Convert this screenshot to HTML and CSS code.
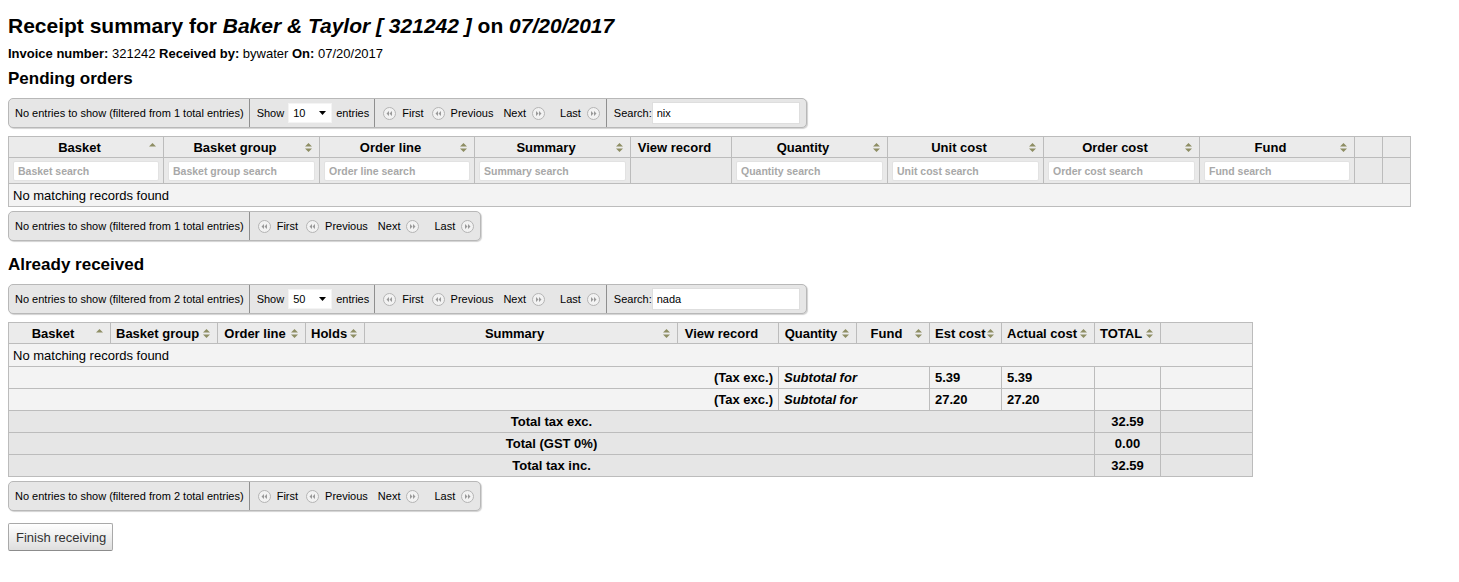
FILE: index.html
```html
<!DOCTYPE html>
<html>
<head>
<meta charset="utf-8">
<title>Receipt summary</title>
<link rel="stylesheet" href="styles.css">
</head>
<body>
<div class="page">
  <h1 class="title">Receipt summary for <em>Baker &amp; Taylor [ 321242 ]</em> on <em>07/20/2017</em></h1>
  <p class="meta"><b>Invoice number:</b> 321242 <b>Received by:</b> bywater <b>On:</b> 07/20/2017</p>

  <h3 class="section-title">Pending orders</h3>

  <div class="pager pager-top">
    <div class="pager-sec info">No entries to show (filtered from 1 total entries)</div>
    <div class="pager-sec length">Show <span class="fake-select">10<svg class="caret" width="7" height="4" viewBox="0 0 7 4"><path d="M0 0h7L3.5 4z" fill="#000"/></svg></span> entries</div>
    <div class="pager-sec paging">
      <span class="pg"><svg class="pg-ico" width="13" height="13" viewBox="0 0 13 13"><circle cx="6.5" cy="6.5" r="6" fill="#f2f2f2" stroke="#b4b4b4"/><path d="M6 4v5L3.5 6.5zM9 4v5L6.5 6.5z" fill="#9a9a9a"/></svg>First</span>
      <span class="pg"><svg class="pg-ico" width="13" height="13" viewBox="0 0 13 13"><circle cx="6.5" cy="6.5" r="6" fill="#f2f2f2" stroke="#b4b4b4"/><path d="M6 4v5L3.5 6.5zM9 4v5L6.5 6.5z" fill="#9a9a9a"/></svg>Previous</span>
      <span class="pg pg-next">Next<svg class="pg-ico" width="13" height="13" viewBox="0 0 13 13"><circle cx="6.5" cy="6.5" r="6" fill="#f2f2f2" stroke="#b4b4b4"/><path d="M4 4v5l2.5-2.5zM7 4v5l2.5-2.5z" fill="#9a9a9a"/></svg></span>
      <span class="pg pg-last">Last<svg class="pg-ico" width="13" height="13" viewBox="0 0 13 13"><circle cx="6.5" cy="6.5" r="6" fill="#f2f2f2" stroke="#b4b4b4"/><path d="M4 4v5l2.5-2.5zM7 4v5l2.5-2.5z" fill="#9a9a9a"/></svg></span>
    </div>
    <div class="pager-sec search">Search:<input class="search-input" type="text" value="nix"></div>
  </div>

  <table class="grid grid-pending">
    <colgroup>
      <col class="c155"><col class="c156"><col class="c155"><col class="c156"><col class="c101"><col class="c156"><col class="c156"><col class="c156"><col class="c155"><col class="c28"><col class="c28">
    </colgroup>
    <thead>
      <tr class="head-row">
        <th>Basket<svg class="sort" width="7" height="9" viewBox="0 0 7 9"><path d="M0 3.5L3.5 0 7 3.5z" fill="#8e8e64"/></svg></th>
        <th>Basket group<svg class="sort" width="7" height="9" viewBox="0 0 7 9"><path d="M0 3.5L3.5 0 7 3.5zM0 5.5L3.5 9 7 5.5z" fill="#8e8e64"/></svg></th>
        <th>Order line<svg class="sort" width="7" height="9" viewBox="0 0 7 9"><path d="M0 3.5L3.5 0 7 3.5zM0 5.5L3.5 9 7 5.5z" fill="#8e8e64"/></svg></th>
        <th>Summary<svg class="sort" width="7" height="9" viewBox="0 0 7 9"><path d="M0 3.5L3.5 0 7 3.5zM0 5.5L3.5 9 7 5.5z" fill="#8e8e64"/></svg></th>
        <th>View record</th>
        <th>Quantity<svg class="sort" width="7" height="9" viewBox="0 0 7 9"><path d="M0 3.5L3.5 0 7 3.5zM0 5.5L3.5 9 7 5.5z" fill="#8e8e64"/></svg></th>
        <th>Unit cost<svg class="sort" width="7" height="9" viewBox="0 0 7 9"><path d="M0 3.5L3.5 0 7 3.5zM0 5.5L3.5 9 7 5.5z" fill="#8e8e64"/></svg></th>
        <th>Order cost<svg class="sort" width="7" height="9" viewBox="0 0 7 9"><path d="M0 3.5L3.5 0 7 3.5zM0 5.5L3.5 9 7 5.5z" fill="#8e8e64"/></svg></th>
        <th>Fund<svg class="sort" width="7" height="9" viewBox="0 0 7 9"><path d="M0 3.5L3.5 0 7 3.5zM0 5.5L3.5 9 7 5.5z" fill="#8e8e64"/></svg></th>
        <th></th>
        <th></th>
      </tr>
      <tr class="filter-row">
        <td><input class="filter" type="text" placeholder="Basket search"></td>
        <td><input class="filter" type="text" placeholder="Basket group search"></td>
        <td><input class="filter" type="text" placeholder="Order line search"></td>
        <td><input class="filter" type="text" placeholder="Summary search"></td>
        <td></td>
        <td><input class="filter" type="text" placeholder="Quantity search"></td>
        <td><input class="filter" type="text" placeholder="Unit cost search"></td>
        <td><input class="filter" type="text" placeholder="Order cost search"></td>
        <td><input class="filter" type="text" placeholder="Fund search"></td>
        <td></td>
        <td></td>
      </tr>
    </thead>
    <tbody>
      <tr class="body-row"><td colspan="11">No matching records found</td></tr>
    </tbody>
  </table>

  <div class="pager pager-bottom-1">
    <div class="pager-sec info">No entries to show (filtered from 1 total entries)</div>
    <div class="pager-sec paging">
      <span class="pg"><svg class="pg-ico" width="13" height="13" viewBox="0 0 13 13"><circle cx="6.5" cy="6.5" r="6" fill="#f2f2f2" stroke="#b4b4b4"/><path d="M6 4v5L3.5 6.5zM9 4v5L6.5 6.5z" fill="#9a9a9a"/></svg>First</span>
      <span class="pg"><svg class="pg-ico" width="13" height="13" viewBox="0 0 13 13"><circle cx="6.5" cy="6.5" r="6" fill="#f2f2f2" stroke="#b4b4b4"/><path d="M6 4v5L3.5 6.5zM9 4v5L6.5 6.5z" fill="#9a9a9a"/></svg>Previous</span>
      <span class="pg pg-next">Next<svg class="pg-ico" width="13" height="13" viewBox="0 0 13 13"><circle cx="6.5" cy="6.5" r="6" fill="#f2f2f2" stroke="#b4b4b4"/><path d="M4 4v5l2.5-2.5zM7 4v5l2.5-2.5z" fill="#9a9a9a"/></svg></span>
      <span class="pg pg-last">Last<svg class="pg-ico" width="13" height="13" viewBox="0 0 13 13"><circle cx="6.5" cy="6.5" r="6" fill="#f2f2f2" stroke="#b4b4b4"/><path d="M4 4v5l2.5-2.5zM7 4v5l2.5-2.5z" fill="#9a9a9a"/></svg></span>
    </div>
  </div>

  <h3 class="section-title received-title">Already received</h3>

  <div class="pager pager-top pager-top-2">
    <div class="pager-sec info">No entries to show (filtered from 2 total entries)</div>
    <div class="pager-sec length">Show <span class="fake-select">50<svg class="caret" width="7" height="4" viewBox="0 0 7 4"><path d="M0 0h7L3.5 4z" fill="#000"/></svg></span> entries</div>
    <div class="pager-sec paging">
      <span class="pg"><svg class="pg-ico" width="13" height="13" viewBox="0 0 13 13"><circle cx="6.5" cy="6.5" r="6" fill="#f2f2f2" stroke="#b4b4b4"/><path d="M6 4v5L3.5 6.5zM9 4v5L6.5 6.5z" fill="#9a9a9a"/></svg>First</span>
      <span class="pg"><svg class="pg-ico" width="13" height="13" viewBox="0 0 13 13"><circle cx="6.5" cy="6.5" r="6" fill="#f2f2f2" stroke="#b4b4b4"/><path d="M6 4v5L3.5 6.5zM9 4v5L6.5 6.5z" fill="#9a9a9a"/></svg>Previous</span>
      <span class="pg pg-next">Next<svg class="pg-ico" width="13" height="13" viewBox="0 0 13 13"><circle cx="6.5" cy="6.5" r="6" fill="#f2f2f2" stroke="#b4b4b4"/><path d="M4 4v5l2.5-2.5zM7 4v5l2.5-2.5z" fill="#9a9a9a"/></svg></span>
      <span class="pg pg-last">Last<svg class="pg-ico" width="13" height="13" viewBox="0 0 13 13"><circle cx="6.5" cy="6.5" r="6" fill="#f2f2f2" stroke="#b4b4b4"/><path d="M4 4v5l2.5-2.5zM7 4v5l2.5-2.5z" fill="#9a9a9a"/></svg></span>
    </div>
    <div class="pager-sec search">Search:<input class="search-input" type="text" value="nada"></div>
  </div>

  <table class="grid grid-received">
    <colgroup>
      <col class="c102"><col class="c107"><col class="c88"><col class="c59"><col class="c313"><col class="c101"><col class="c78"><col class="c73"><col class="c72"><col class="c93"><col class="c66"><col class="c92">
    </colgroup>
    <thead>
      <tr class="head-row">
        <th>Basket<svg class="sort" width="7" height="9" viewBox="0 0 7 9"><path d="M0 3.5L3.5 0 7 3.5z" fill="#8e8e64"/></svg></th>
        <th>Basket group<svg class="sort" width="7" height="9" viewBox="0 0 7 9"><path d="M0 3.5L3.5 0 7 3.5zM0 5.5L3.5 9 7 5.5z" fill="#8e8e64"/></svg></th>
        <th>Order line<svg class="sort" width="7" height="9" viewBox="0 0 7 9"><path d="M0 3.5L3.5 0 7 3.5zM0 5.5L3.5 9 7 5.5z" fill="#8e8e64"/></svg></th>
        <th>Holds<svg class="sort" width="7" height="9" viewBox="0 0 7 9"><path d="M0 3.5L3.5 0 7 3.5zM0 5.5L3.5 9 7 5.5z" fill="#8e8e64"/></svg></th>
        <th>Summary<svg class="sort" width="7" height="9" viewBox="0 0 7 9"><path d="M0 3.5L3.5 0 7 3.5zM0 5.5L3.5 9 7 5.5z" fill="#8e8e64"/></svg></th>
        <th>View record</th>
        <th>Quantity<svg class="sort" width="7" height="9" viewBox="0 0 7 9"><path d="M0 3.5L3.5 0 7 3.5zM0 5.5L3.5 9 7 5.5z" fill="#8e8e64"/></svg></th>
        <th>Fund<svg class="sort" width="7" height="9" viewBox="0 0 7 9"><path d="M0 3.5L3.5 0 7 3.5zM0 5.5L3.5 9 7 5.5z" fill="#8e8e64"/></svg></th>
        <th>Est cost<svg class="sort" width="7" height="9" viewBox="0 0 7 9"><path d="M0 3.5L3.5 0 7 3.5zM0 5.5L3.5 9 7 5.5z" fill="#8e8e64"/></svg></th>
        <th>Actual cost<svg class="sort" width="7" height="9" viewBox="0 0 7 9"><path d="M0 3.5L3.5 0 7 3.5zM0 5.5L3.5 9 7 5.5z" fill="#8e8e64"/></svg></th>
        <th>TOTAL<svg class="sort" width="7" height="9" viewBox="0 0 7 9"><path d="M0 3.5L3.5 0 7 3.5zM0 5.5L3.5 9 7 5.5z" fill="#8e8e64"/></svg></th>
        <th></th>
      </tr>
    </thead>
    <tbody>
      <tr class="body-row"><td colspan="12">No matching records found</td></tr>
    </tbody>
    <tfoot>
      <tr class="sub-row">
        <th colspan="6" class="right">(Tax exc.)</th>
        <th colspan="2" class="left"><i>Subtotal for</i></th>
        <th class="left">5.39</th>
        <th class="left">5.39</th>
        <td></td>
        <td></td>
      </tr>
      <tr class="sub-row">
        <th colspan="6" class="right">(Tax exc.)</th>
        <th colspan="2" class="left"><i>Subtotal for</i></th>
        <th class="left">27.20</th>
        <th class="left">27.20</th>
        <td></td>
        <td></td>
      </tr>
      <tr class="total-row">
        <th colspan="10">Total tax exc.</th>
        <th>32.59</th>
        <td></td>
      </tr>
      <tr class="total-row">
        <th colspan="10">Total (GST 0%)</th>
        <th>0.00</th>
        <td></td>
      </tr>
      <tr class="total-row">
        <th colspan="10">Total tax inc.</th>
        <th>32.59</th>
        <td></td>
      </tr>
    </tfoot>
  </table>

  <div class="pager pager-bottom-2">
    <div class="pager-sec info">No entries to show (filtered from 2 total entries)</div>
    <div class="pager-sec paging">
      <span class="pg"><svg class="pg-ico" width="13" height="13" viewBox="0 0 13 13"><circle cx="6.5" cy="6.5" r="6" fill="#f2f2f2" stroke="#b4b4b4"/><path d="M6 4v5L3.5 6.5zM9 4v5L6.5 6.5z" fill="#9a9a9a"/></svg>First</span>
      <span class="pg"><svg class="pg-ico" width="13" height="13" viewBox="0 0 13 13"><circle cx="6.5" cy="6.5" r="6" fill="#f2f2f2" stroke="#b4b4b4"/><path d="M6 4v5L3.5 6.5zM9 4v5L6.5 6.5z" fill="#9a9a9a"/></svg>Previous</span>
      <span class="pg pg-next">Next<svg class="pg-ico" width="13" height="13" viewBox="0 0 13 13"><circle cx="6.5" cy="6.5" r="6" fill="#f2f2f2" stroke="#b4b4b4"/><path d="M4 4v5l2.5-2.5zM7 4v5l2.5-2.5z" fill="#9a9a9a"/></svg></span>
      <span class="pg pg-last">Last<svg class="pg-ico" width="13" height="13" viewBox="0 0 13 13"><circle cx="6.5" cy="6.5" r="6" fill="#f2f2f2" stroke="#b4b4b4"/><path d="M4 4v5l2.5-2.5zM7 4v5l2.5-2.5z" fill="#9a9a9a"/></svg></span>
    </div>
  </div>

  <div class="actions">
    <button class="btn" type="button">Finish receiving</button>
  </div>
</div>
</body>
</html>
```

FILE: styles.css
```css
* { box-sizing: border-box; }

body {
  margin: 0;
  background: #fff;
  color: #000;
  font-family: "Liberation Sans", Arial, sans-serif;
}

.page {
  padding: 0 8px;
}

.title {
  margin: 13px 0 0;
  font-size: 21px;
  line-height: 26px;
  font-weight: bold;
}

.title em { font-style: italic; }

.meta {
  margin: 7px 0 0;
  font-size: 13px;
  line-height: 16px;
}

.section-title {
  margin: 7px 0 0;
  font-size: 17px;
  line-height: 20px;
  font-weight: bold;
}

.received-title { margin-top: 14px; }

/* ---------- DataTables style pager bar ---------- */
.pager {
  display: flex;
  width: max-content;
  height: 30px;
  margin-top: 9px;
  border: 1px solid #b8b8b8;
  border-radius: 5px;
  background: #e6e6e6;
  box-shadow: 1px 1px 1px rgba(0, 0, 0, 0.18);
  font-size: 11px;
  color: #000;
}

.pager-top-2 { margin-top: 9px; }
.pager-bottom-1 { margin-top: 4px; }
.pager-bottom-2 { margin-top: 4px; }

.pager-sec {
  display: flex;
  align-items: center;
  padding: 0 6px;
  border-left: 1px solid #8f8f8f;
}

.pager-sec:first-child { border-left: none; }

.info { padding: 0 5px 0 6px; }

.length {
  gap: 4px;
  padding: 0 5px 0 7px;
}

.fake-select {
  display: flex;
  align-items: center;
  justify-content: space-between;
  width: 44px;
  height: 20px;
  padding: 0 5px 0 4px;
  background: #fff;
  border: 1px solid #f4f4f4;
}

.caret { display: block; }

.paging {
  gap: 8px;
  padding: 0 6px 0 8px;
}

.pg {
  display: flex;
  align-items: center;
  gap: 6px;
}

.pg-next { margin-left: 2px; }
.pg-last { margin-left: 7px; }

.pg-ico { display: block; }

.search {
  padding: 0 6px 0 7px;
}

.search-input {
  width: 148px;
  height: 22px;
  padding: 0 4px;
  border: 1px solid #dedede;
  background: #fff;
  font-family: "Liberation Sans", Arial, sans-serif;
  font-size: 11px;
  color: #000;
  outline: none;
}

/* ---------- tables ---------- */
.grid {
  border-collapse: collapse;
  table-layout: fixed;
  margin-top: 8px;
  border: 1px solid #bcbcbc;
  font-size: 13px;
}

.grid-pending { width: 1403px; }
.grid-received { width: 1245px; }

.c28 { width: 28px; }
.c59 { width: 59px; }
.c66 { width: 66px; }
.c72 { width: 72px; }
.c73 { width: 73px; }
.c78 { width: 78px; }
.c88 { width: 88px; }
.c92 { width: 92px; }
.c93 { width: 93px; }
.c101 { width: 101px; }
.c102 { width: 102px; }
.c107 { width: 107px; }
.c155 { width: 155px; }
.c156 { width: 156px; }
.c313 { width: 313px; }

.grid th,
.grid td {
  border: 1px solid #bcbcbc;
}

.head-row th {
  position: relative;
  height: 21px;
  padding: 0 18px 0 5px;
  background: #ebebeb;
  font-weight: bold;
  text-align: center;
  white-space: nowrap;
  overflow: visible;
}

.sort {
  position: absolute;
  right: 7px;
  top: 50%;
  margin-top: -4px;
}

.filter-row td {
  height: 26px;
  padding: 0 4px;
  background: #e9e9e9;
}

.filter {
  display: block;
  width: 100%;
  height: 20px;
  padding: 0 4px;
  border: 1px solid #e2e2e2;
  border-radius: 2px;
  background: #fff;
  font-family: "Liberation Sans", Arial, sans-serif;
  font-size: 10.5px;
  font-weight: bold;
  outline: none;
}

.filter::placeholder {
  color: #a8a8a8;
  opacity: 1;
}

.body-row td {
  height: 23px;
  padding: 0 4px;
  background: #f3f3f3;
  text-align: left;
}

.sub-row th,
.sub-row td {
  height: 22px;
  padding: 0 5px;
  background: #f3f3f3;
  font-weight: bold;
}

.total-row th,
.total-row td {
  height: 22px;
  padding: 0 5px;
  background: #e6e6e6;
  font-weight: bold;
  text-align: center;
}

.right { text-align: right; }
.left { text-align: left; }

/* ---------- button ---------- */
.actions {
  margin-top: 12px;
}

.btn {
  height: 28px;
  padding: 0 6px 0 7px;
  border: 1px solid #a9a9a9;
  border-bottom-color: #8c8c8c;
  border-radius: 2px;
  background: linear-gradient(#ffffff, #dedede);
  font-family: "Liberation Sans", Arial, sans-serif;
  font-size: 13px;
  color: #333;
}
```
